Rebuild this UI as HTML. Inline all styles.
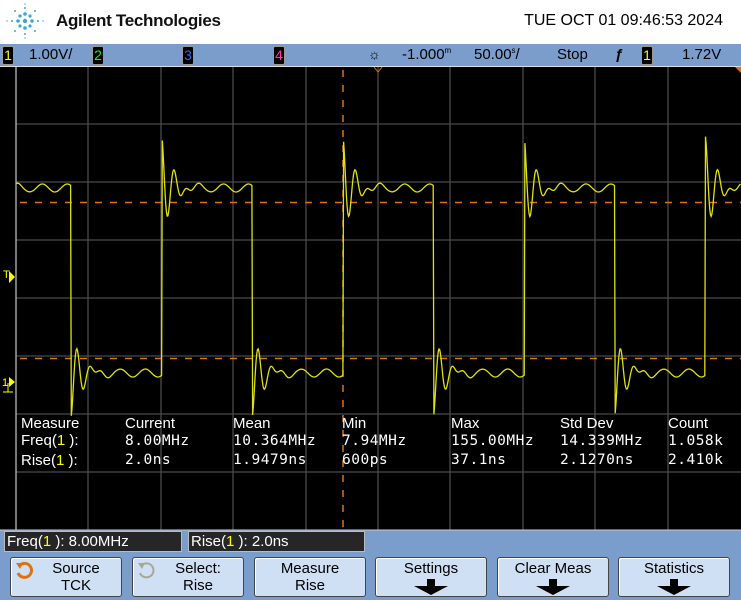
<!DOCTYPE html>
<html><head><style>
body{margin:0;width:741px;height:600px;overflow:hidden;background:#7b9dcc;font-family:"Liberation Sans",sans-serif;position:relative}
.hdr{position:absolute;left:0;top:0;width:741px;height:44px;background:#fff}
.sb{position:absolute;left:0;top:44px;width:741px;height:22px;background:#7b9dcc;font-size:15px;color:#000}
.sb span{position:absolute;top:2px}
.cb{position:absolute;top:2px;width:10px;height:17px;background:#000;border:1px solid #999;border-radius:2px;text-align:center;font-size:14px;line-height:17px}
.scr{position:absolute;left:0;top:67px;width:741px;height:463px;background:#000}
.mt{position:absolute;color:#fff;font-size:15px;font-family:"Liberation Sans",sans-serif}
.mono{font-family:"DejaVu Sans Mono","Liberation Mono",monospace;font-size:14.5px;letter-spacing:0.5px}
.y{color:#ff0}
.rb{position:absolute;top:531px;background:#262626;border:1px solid #bbb;color:#fff;font-size:15px;line-height:19px;padding-left:2px;box-sizing:border-box;height:21px}
.sk{position:absolute;top:557px;width:112px;height:40px;background:#cfe0f5;border:1px solid #444;border-radius:3px;box-sizing:border-box;text-align:center;font-size:15px;line-height:17px;padding-top:2px;box-shadow:inset 1px 1px 0 #fff}
.arr{width:0;height:0;margin:1px auto 0;border-left:17px solid transparent;border-right:17px solid transparent;border-top:9px solid #000;position:relative}
.arr:before{content:"";position:absolute;left:-4px;top:-16px;width:8px;height:8px;background:#000}
</style></head><body>
<div class="hdr">
<svg width="50" height="44" style="position:absolute;left:0;top:0">
<g fill="#3aa5d8">
<circle cx="25" cy="21" r="2.2"/>
<circle cx="25" cy="14" r="1.8"/><circle cx="25" cy="28" r="1.8"/><circle cx="18" cy="21" r="1.8"/><circle cx="32" cy="21" r="1.8"/>
<circle cx="20" cy="16" r="1.6"/><circle cx="30" cy="16" r="1.6"/><circle cx="20" cy="26" r="1.6"/><circle cx="30" cy="26" r="1.6"/>
<circle cx="25" cy="8" r="1"/><circle cx="25" cy="34" r="1"/><circle cx="12" cy="21" r="1"/><circle cx="38" cy="21" r="1"/>
<circle cx="15" cy="11" r="1"/><circle cx="35" cy="11" r="1"/><circle cx="15" cy="31" r="1"/><circle cx="35" cy="31" r="1"/>
<circle cx="25" cy="4" r=".7"/><circle cx="25" cy="38" r=".7"/><circle cx="7" cy="21" r=".7"/><circle cx="43" cy="21" r=".7"/>
</g></svg>
<div style="position:absolute;left:56px;top:11px;font-size:17px;font-weight:bold;color:#111;letter-spacing:-0.3px">Agilent Technologies</div>
<div style="position:absolute;right:18px;top:12px;font-size:16px;color:#000">TUE OCT 01 09:46:53 2024</div>
</div>
<div class="sb">
<div class="cb" style="left:2px;color:#ff0">1</div><span style="left:29px">1.00V/</span>
<div class="cb" style="left:92px;color:#0f0">2</div>
<div class="cb" style="left:182px;color:#36f">3</div>
<div class="cb" style="left:273px;color:#f3a">4</div>
<span style="left:368px;font-size:14px">☼</span>
<span style="left:402px">-1.000<sup style="font-size:8px">m</sup></span>
<span style="left:474px">50.00<sup style="font-size:8px">s</sup>/</span>
<span style="left:557px">Stop</span>
<span style="left:615px;font-weight:bold">ƒ</span>
<div class="cb" style="left:641px;color:#ff0">1</div>
<span style="left:682px">1.72V</span>
</div>
<div class="scr"></div>
<svg width="741" height="600" style="position:absolute;left:0;top:0">
<g stroke="#4a4a4a" stroke-width="1.3">
<line x1="88" y1="67" x2="88" y2="530"/><line x1="161" y1="67" x2="161" y2="530"/><line x1="233" y1="67" x2="233" y2="530"/><line x1="306" y1="67" x2="306" y2="530"/><line x1="378" y1="67" x2="378" y2="530"/><line x1="450" y1="67" x2="450" y2="530"/><line x1="523" y1="67" x2="523" y2="530"/><line x1="595" y1="67" x2="595" y2="530"/><line x1="668" y1="67" x2="668" y2="530"/>
<line x1="16" y1="124" x2="741" y2="124"/><line x1="16" y1="182" x2="741" y2="182"/><line x1="16" y1="240" x2="741" y2="240"/><line x1="16" y1="298" x2="741" y2="298"/><line x1="16" y1="356" x2="741" y2="356"/><line x1="16" y1="414" x2="741" y2="414"/><line x1="16" y1="472" x2="741" y2="472"/>
</g>
<line x1="16" y1="67" x2="16" y2="530" stroke="#bbb" stroke-width="1.3"/>
<line x1="0" y1="66.5" x2="741" y2="66.5" stroke="#ddd" stroke-width="1"/>
<line x1="0" y1="530" x2="741" y2="530" stroke="#ccc" stroke-width="1"/>
<g stroke="#e07010" stroke-width="1.5" stroke-dasharray="7,8">
<line x1="20" y1="202.5" x2="741" y2="202.5"/><line x1="20" y1="358.5" x2="741" y2="358.5"/><line x1="343" y1="70" x2="343" y2="530"/>
</g>
<path d="M374 67 L378 72 L382 67" stroke="#e07010" fill="none"/>
<path d="M735 67 L741 67 L741 73Z" fill="#e07010"/>
<path id="w" fill="none" stroke="#e0e010" stroke-width="1.3"/>
<g fill="#ff0" font-size="11" font-family="Liberation Sans">
<text x="3" y="278">T</text><path d="M9 271 L15 277 L9 283Z"/>
<text x="2" y="386">1</text><path d="M9 377 L15 382 L9 387Z"/><line x1="8" y1="383" x2="8" y2="392" stroke="#ff0"/><line x1="3" y1="392" x2="13" y2="392" stroke="#ff0"/>
</g>
</svg>
<div class="mt" style="left:21px;top:415px">Measure</div>
<div class="mt" style="left:21px;top:432px">Freq(<span class="y">1</span> ):</div>
<div class="mt" style="left:21px;top:452px">Rise(<span class="y">1</span> ):</div>
<div class="mt" style="left:125px;top:415px">Current</div>
<div class="mt" style="left:233px;top:415px">Mean</div>
<div class="mt" style="left:342px;top:415px">Min</div>
<div class="mt" style="left:451px;top:415px">Max</div>
<div class="mt" style="left:560px;top:415px">Std Dev</div>
<div class="mt" style="left:668px;top:415px">Count</div>
<div class="mt mono" style="left:125px;top:433px">8.00MHz</div>
<div class="mt mono" style="left:233px;top:433px">10.364MHz</div>
<div class="mt mono" style="left:342px;top:433px">7.94MHz</div>
<div class="mt mono" style="left:451px;top:433px">155.00MHz</div>
<div class="mt mono" style="left:560px;top:433px">14.339MHz</div>
<div class="mt mono" style="left:668px;top:433px">1.058k</div>
<div class="mt mono" style="left:125px;top:452px">2.0ns</div>
<div class="mt mono" style="left:233px;top:452px">1.9479ns</div>
<div class="mt mono" style="left:342px;top:452px">600ps</div>
<div class="mt mono" style="left:451px;top:452px">37.1ns</div>
<div class="mt mono" style="left:560px;top:452px">2.1270ns</div>
<div class="mt mono" style="left:668px;top:452px">2.410k</div>
<div class="rb" style="left:4px;width:178px">Freq(<span class="y">1</span> ): 8.00MHz</div>
<div class="rb" style="left:188px;width:177px">Rise(<span class="y">1</span> ): 2.0ns</div>
<div class="sk" style="left:10px;padding-left:20px"><svg width="22" height="22" style="position:absolute;left:3px;top:2px"><path d="M6 5 A7 7 0 1 1 4 13" fill="none" stroke="#e07010" stroke-width="3"/><path d="M2 3 L9 3 L6 9Z" fill="#e07010"/></svg>Source<br>TCK</div>
<div class="sk" style="left:132px;padding-left:20px"><svg width="22" height="22" style="position:absolute;left:3px;top:2px"><path d="M6 5 A7 7 0 1 1 4 13" fill="none" stroke="#a8a890" stroke-width="2"/><path d="M2 3 L9 3 L6 9Z" fill="#a8a890"/></svg>Select:<br>Rise</div>
<div class="sk" style="left:254px">Measure<br>Rise</div>
<div class="sk" style="left:375px">Settings<div class="arr" style="margin-top:9px"></div></div>
<div class="sk" style="left:497px">Clear Meas<div class="arr" style="margin-top:9px"></div></div>
<div class="sk" style="left:618px">Statistics<div class="arr" style="margin-top:9px"></div></div>
<script>
var P=181.2,r0=161.8;
function lvl(x){
 var t=((x-r0)%P+P)%P;
 if(t<90.5){
  var ring=-56*Math.exp(-t/9)*Math.cos(2*Math.PI*t/12.5);
  return 188+ring+4*Math.sin(2*Math.PI*(t-18)/25);
 } else {
  var u=t-90.5;
  var ring=48*Math.exp(-u/9)*Math.cos(2*Math.PI*u/12.5);
  return 373+ring-4*Math.sin(2*Math.PI*(u-18)/25);
 }
}
var s="";
for(var x=16;x<=741;x+=0.7){
 var y=lvl(x);
 s+=(s?"L":"M")+x.toFixed(1)+" "+y.toFixed(1);
}
document.getElementById("w").setAttribute("d",s);
</script>
</body></html>
